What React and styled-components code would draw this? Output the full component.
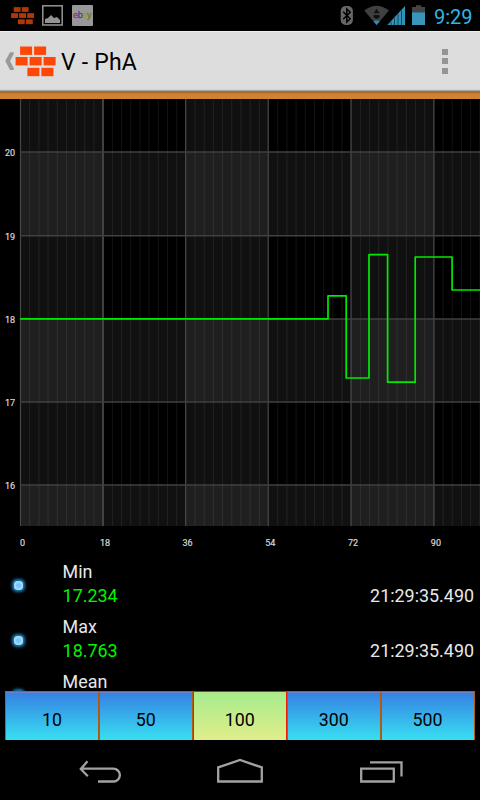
import React from "react";
import styled, { createGlobalStyle } from "styled-components";

const GlobalStyle = createGlobalStyle`
  * { box-sizing: border-box; }
  body { margin: 0; background: #000; font-family: Roboto, "Noto Sans", sans-serif; }
  svg { display: block; flex: none; }
`;

const Screen = styled.div`
  width: 480px;
  height: 800px;
  display: flex;
  flex-direction: column;
  overflow: hidden;
  background: #000;
`;

const StatusBar = styled.header`
  height: 31px;
  flex: none;
  display: flex;
  justify-content: space-between;
`;

const Clock = styled.span`
  width: 46px;
  font-size: 20px;
  line-height: 34px;
  color: #33b5e5;
`;

const StatusGroup = styled.div`
  display: flex;
`;

const ActionBar = styled.div`
  height: 68px;
  flex: none;
  display: flex;
  background: linear-gradient(#eee 0 1px, #ddd 1px 58px, #c8c8c8 59px, #888 60px, #9a5c20 61px, #c47a2e 62px, #d28233 64px, #d28233 68px);
`;

const Title = styled.h1`
  flex: 1;
  margin: 0 0 0 4px;
  font-size: 23px;
  letter-spacing: 0.2px;
  font-weight: 400;
  line-height: 64px;
  color: #000;
`;

const Overflow = styled.button`
  width: 70px;
  height: 60px;
  padding: 18px 0 0 32px;
  border: 0;
  background: none;
  display: flex;
  flex-direction: column;
  gap: 3.4px;
`;

const OverflowDot = styled.i`
  width: 6px;
  height: 6px;
  background: #949494;
`;

const ChartLabel = styled.text`
  font-family: Roboto, sans-serif;
  font-size: 9px;
  fill: #d8d8d8;
  stroke: #d8d8d8;
  stroke-width: 0.2px;
`;

const Stats = styled.div`
  height: 133px;
  flex: none;
  overflow: hidden;
`;

const StatRow = styled.div`
  height: 55px;
  display: grid;
  grid-template-columns: 62.6px 1fr auto;
  grid-template-rows: 24px 24px;
  padding: 2px 6px 0 0;
  font-size: 17.9px;
  line-height: 24px;
  color: #e8e8e8;
`;

const Led = styled.span`
  grid-row: 1 / 3;
  width: 18px;
  height: 18px;
  margin: 16px 0 0 9.5px;
  display: flex;
  align-items: center;
  justify-content: center;

  &::before {
    content: "";
    width: 9px;
    height: 9px;
    border-radius: 3px;
    background: radial-gradient(circle, #75c5f8 0 1.5px, #a0dcff 3.5px, #8ad2fc 6px);
    box-shadow: 0 0 3px 2px #1c7db5;
  }
`;

const StatName = styled.span`
  grid-column: 2 / 4;
`;

const StatValue = styled.span`
  color: #00f500;
`;

const StatTime = styled.span`
  text-align: right;
`;

const RangeBar = styled.div`
  height: 49px;
  flex: none;
  display: flex;
  margin: 0 5.5px 0 5px;
`;

const RangeButton = styled.button`
  flex: 1;
  padding: 8px 0 0;
  border: 1px solid ${(p) => (p.$selected ? "#f01a00" : "#b25a12")};
  border-bottom: 0;
  box-shadow: inset 0 1px 0 ${(p) => (p.$selected ? "#b6e488" : "#7080c8")};
  background: ${(p) =>
    p.$selected ? "linear-gradient(#a6ec8c, #e2ec8a)" : "linear-gradient(#3580e2, #38dff2)"};
  font: 17.8px/24px Roboto, sans-serif;
  color: #000;
`;

const NavBar = styled.nav`
  height: 60px;
  flex: none;
  display: flex;
`;

const BRICKS = [
  [5, 0], [19, 0],
  [0.5, 10.5], [14.5, 10.5], [28.5, 10.5],
  [12.3, 21.3], [26.3, 21.3],
];

function BrickShapes() {
  return BRICKS.map(([x, y]) => (
    <rect key={`${x}-${y}`} x={x} y={y} width="12" height="8.4" />
  ));
}

function NotificationIcons() {
  return (
    <StatusGroup>
      <svg width="100" height="31">
        <g transform="translate(10.8 7.1) scale(.575)" fill="#b43505">
          <BrickShapes />
        </g>
        <rect x="42.8" y="5.8" width="19.4" height="19.2" fill="none" stroke="#8c8c8c" strokeWidth="1.6" />
        <path d="M45 23v-4l3-1 3-3 3 3 3-1 3 3v3z" fill="#939393" />
        <rect x="72" y="5" width="21" height="21" rx="1" fill="#989898" />
        <g fontFamily="Liberation Sans" fontSize="9" fontWeight="400" strokeWidth=".3">
          <text x="73.2" y="18" fill="#b52f40" stroke="#b52f40">e</text>
          <text x="77.8" y="18" fill="#2850b0" stroke="#2850b0">b</text>
          <text x="82.3" y="18" fill="#c58d10" stroke="#c58d10">a</text>
          <text x="87" y="18" fill="#52851a" stroke="#52851a">y</text>
        </g>
      </svg>
    </StatusGroup>
  );
}

function SystemIcons() {
  return (
    <svg width="100" height="31" viewBox="334 0 100 31">
      <rect x="340.7" y="6" width="12.2" height="19" rx="5" fill="#666" />
      <path d="M343.2 11.8l7 7-3.4 3.3V9l3.4 3.2-7 7" fill="none" stroke="#000" strokeWidth="1.5" />
      <path d="M364.3 10.5Q376.5 1 389 10.5L376.6 25Z" fill="#404040" />
      <path d="M373.6 13.2l3-4.4 3 4.4zM373.6 15h6v2.6l-3 1.4-3-1.4z" fill="#111" />
      <path d="M373.4 21.2q3.2-1.6 6.4 0L376.6 25z" fill="#278fb5" />
      <path d="M387.3 25L405 6v19z" fill="#3292b6" />
      <path d="M391 21.5V25M394.5 18v7M398 14v11M401.5 10.5V25" stroke="#053a4f" strokeWidth=".8" />
      <path d="M412 7h4V5.3h5.3V7h3.7v5.5h-13z" fill="#444" />
      <rect x="412" y="12.3" width="13" height="12.7" fill="#3995ba" />
    </svg>
  );
}

const COLS = [20.5, 103, 185.6, 268.2, 351, 433.9, 516.6];
const ROWS = [152, 235.7, 318.9, 402, 485];
const TRACE =
  "M20 318.8H328V295.8H346.2V378H369V254.7H387.6V382.2H415.2V257H452.1V290H480";

function Chart() {
  const minors = Array.from({ length: 50 }, (_, i) => 20.5 + (i + 1) * 9.186);
  return (
    <svg width="480" height="459" viewBox="0 99 480 459">
      {[0, 2, 4].map((i) => (
        <rect key={i} x={COLS[i]} y="99" width={COLS[i + 1] - COLS[i]} height="427" fill="#fff" fillOpacity=".064" />
      ))}
      {[[152, 84], [319, 83], [485, 41]].map(([y, h]) => (
        <rect key={y} x="20.5" y={y} width="460" height={h} fill="#fff" fillOpacity=".066" />
      ))}
      {minors.map((x) => (
        <path key={x} d={`M${x} 100V526`} stroke="#fff" strokeOpacity=".08" />
      ))}
      {COLS.slice(0, 6).map((x, i) => (
        <path key={x} d={`M${x} 99V526`} stroke="#464646" strokeWidth={i === 1 ? 1.8 : 1.2} />
      ))}
      {ROWS.map((y) => (
        <path key={y} d={`M20 ${y}H480`} stroke="#414141" strokeWidth="1.5" />
      ))}
      <path d={TRACE} fill="none" stroke="#00ea00" strokeWidth="1.7" strokeLinejoin="round" />
      {ROWS.map((y, i) => (
        <ChartLabel key={y} x="15.2" y={y + 4} textAnchor="end">{20 - i}</ChartLabel>
      ))}
      {COLS.slice(0, 6).map((x, i) => (
        <ChartLabel key={x} x={x + 2} y="545.8" textAnchor="middle">{i * 18}</ChartLabel>
      ))}
    </svg>
  );
}

const STATS = [
  { name: "Min", value: "17.234", time: "21:29:35.490" },
  { name: "Max", value: "18.763", time: "21:29:35.490" },
  { name: "Mean", value: "", time: "" },
];
const RANGES = [10, 50, 100, 300, 500];

export default function App() {
  return (
    <Screen>
      <GlobalStyle />
      <StatusBar>
        <NotificationIcons />
        <StatusGroup>
          <SystemIcons />
          <Clock>9:29</Clock>
        </StatusGroup>
      </StatusBar>
      <ActionBar>
        <svg width="15" height="60">
          <path d="M10 21.2h3.8v1.5L10 30l3.8 7.3V39H10L5.3 30z" fill="#999" />
        </svg>
        <svg width="42" height="60" viewBox="15 31 42 60">
          <g transform="translate(15.1 46.5)" fill="#fc4707">
            <BrickShapes />
          </g>
        </svg>
        <Title>V - PhA</Title>
        <Overflow aria-label="More options">
          <OverflowDot /><OverflowDot /><OverflowDot />
        </Overflow>
      </ActionBar>
      <Chart />
      <Stats>
        {STATS.map((s) => (
          <StatRow key={s.name}>
            <Led />
            <StatName>{s.name}</StatName>
            <StatValue>{s.value}</StatValue>
            <StatTime>{s.time}</StatTime>
          </StatRow>
        ))}
      </Stats>
      <RangeBar>
        {RANGES.map((r) => (
          <RangeButton key={r} $selected={r === 100}>{r}</RangeButton>
        ))}
      </RangeBar>
      <NavBar>
        <svg width="480" height="60" viewBox="0 740 480 60" fill="none" stroke="#a2a2a2" strokeWidth="2.3">
          <path d="M87.5 761.3L80.8 769l7 7.2M81 768.7h32.5a6.4 6.4 0 0 1 0 12.8H98" />
          <path d="M218.2 781.5V767.4L240 760l21.8 7.4v14.1z" />
          <path d="M361.2 768.7h32.6v12.8h-32.6zM370 762.3h31.5v14.2" />
        </svg>
      </NavBar>
    </Screen>
  );
}
